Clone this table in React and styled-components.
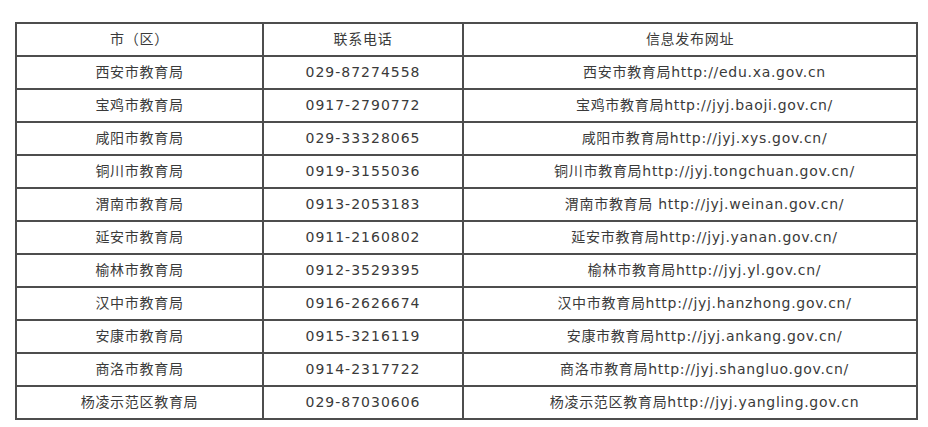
import React from "react";
import styled, { createGlobalStyle } from "styled-components";

const Global = createGlobalStyle`
  html, body { margin: 0; padding: 0; background: #fff; }
  body { font-family: "DejaVu Sans", Verdana, "Noto Sans CJK SC", sans-serif; }
`;

const Page = styled.div`
  padding: 22px 0 0 15px;
`;

const Table = styled.table`
  border-collapse: collapse;
  table-layout: fixed;
  width: 901px;
  border: 2px solid #4d4d4d;
`;

const Cell = styled.td`
  border: 2px solid #4d4d4d;
  height: 31px;
  padding: 0 0 0 ${(p) => (p.$indent ? "29px" : "0")};
  text-align: center;
  vertical-align: middle;
  font-family: "DejaVu Sans", Verdana, "Noto Sans CJK SC", sans-serif;
  font-size: 14px;
  letter-spacing: ${(p) => (p.$num ? "1px" : "0.7px")};
  color: #3a3a3a;
  line-height: 31px;
  white-space: nowrap;
`;

const rows = [
  ["西安市教育局", "029-87274558", "西安市教育局http://edu.xa.gov.cn"],
  ["宝鸡市教育局", "0917-2790772", "宝鸡市教育局http://jyj.baoji.gov.cn/"],
  ["咸阳市教育局", "029-33328065", "咸阳市教育局http://jyj.xys.gov.cn/"],
  ["铜川市教育局", "0919-3155036", "铜川市教育局http://jyj.tongchuan.gov.cn/"],
  ["渭南市教育局", "0913-2053183", "渭南市教育局 http://jyj.weinan.gov.cn/"],
  ["延安市教育局", "0911-2160802", "延安市教育局http://jyj.yanan.gov.cn/"],
  ["榆林市教育局", "0912-3529395", "榆林市教育局http://jyj.yl.gov.cn/"],
  ["汉中市教育局", "0916-2626674", "汉中市教育局http://jyj.hanzhong.gov.cn/"],
  ["安康市教育局", "0915-3216119", "安康市教育局http://jyj.ankang.gov.cn/"],
  ["商洛市教育局", "0914-2317722", "商洛市教育局http://jyj.shangluo.gov.cn/"],
  ["杨凌示范区教育局", "029-87030606", "杨凌示范区教育局http://jyj.yangling.gov.cn"],
];

export default function App() {
  return (
    <Page>
      <Global />
      <Table>
        <colgroup>
          <col style={{ width: 247 }} />
          <col style={{ width: 200 }} />
          <col style={{ width: 454 }} />
        </colgroup>
        <tbody>
          <tr>
            <Cell>市（区）</Cell>
            <Cell>联系电话</Cell>
            <Cell>信息发布网址</Cell>
          </tr>
          {rows.map((r) => (
            <tr key={r[0]}>
              <Cell>{r[0]}</Cell>
              <Cell $num>{r[1]}</Cell>
              <Cell $indent>{r[2]}</Cell>
            </tr>
          ))}
        </tbody>
      </Table>
    </Page>
  );
}
